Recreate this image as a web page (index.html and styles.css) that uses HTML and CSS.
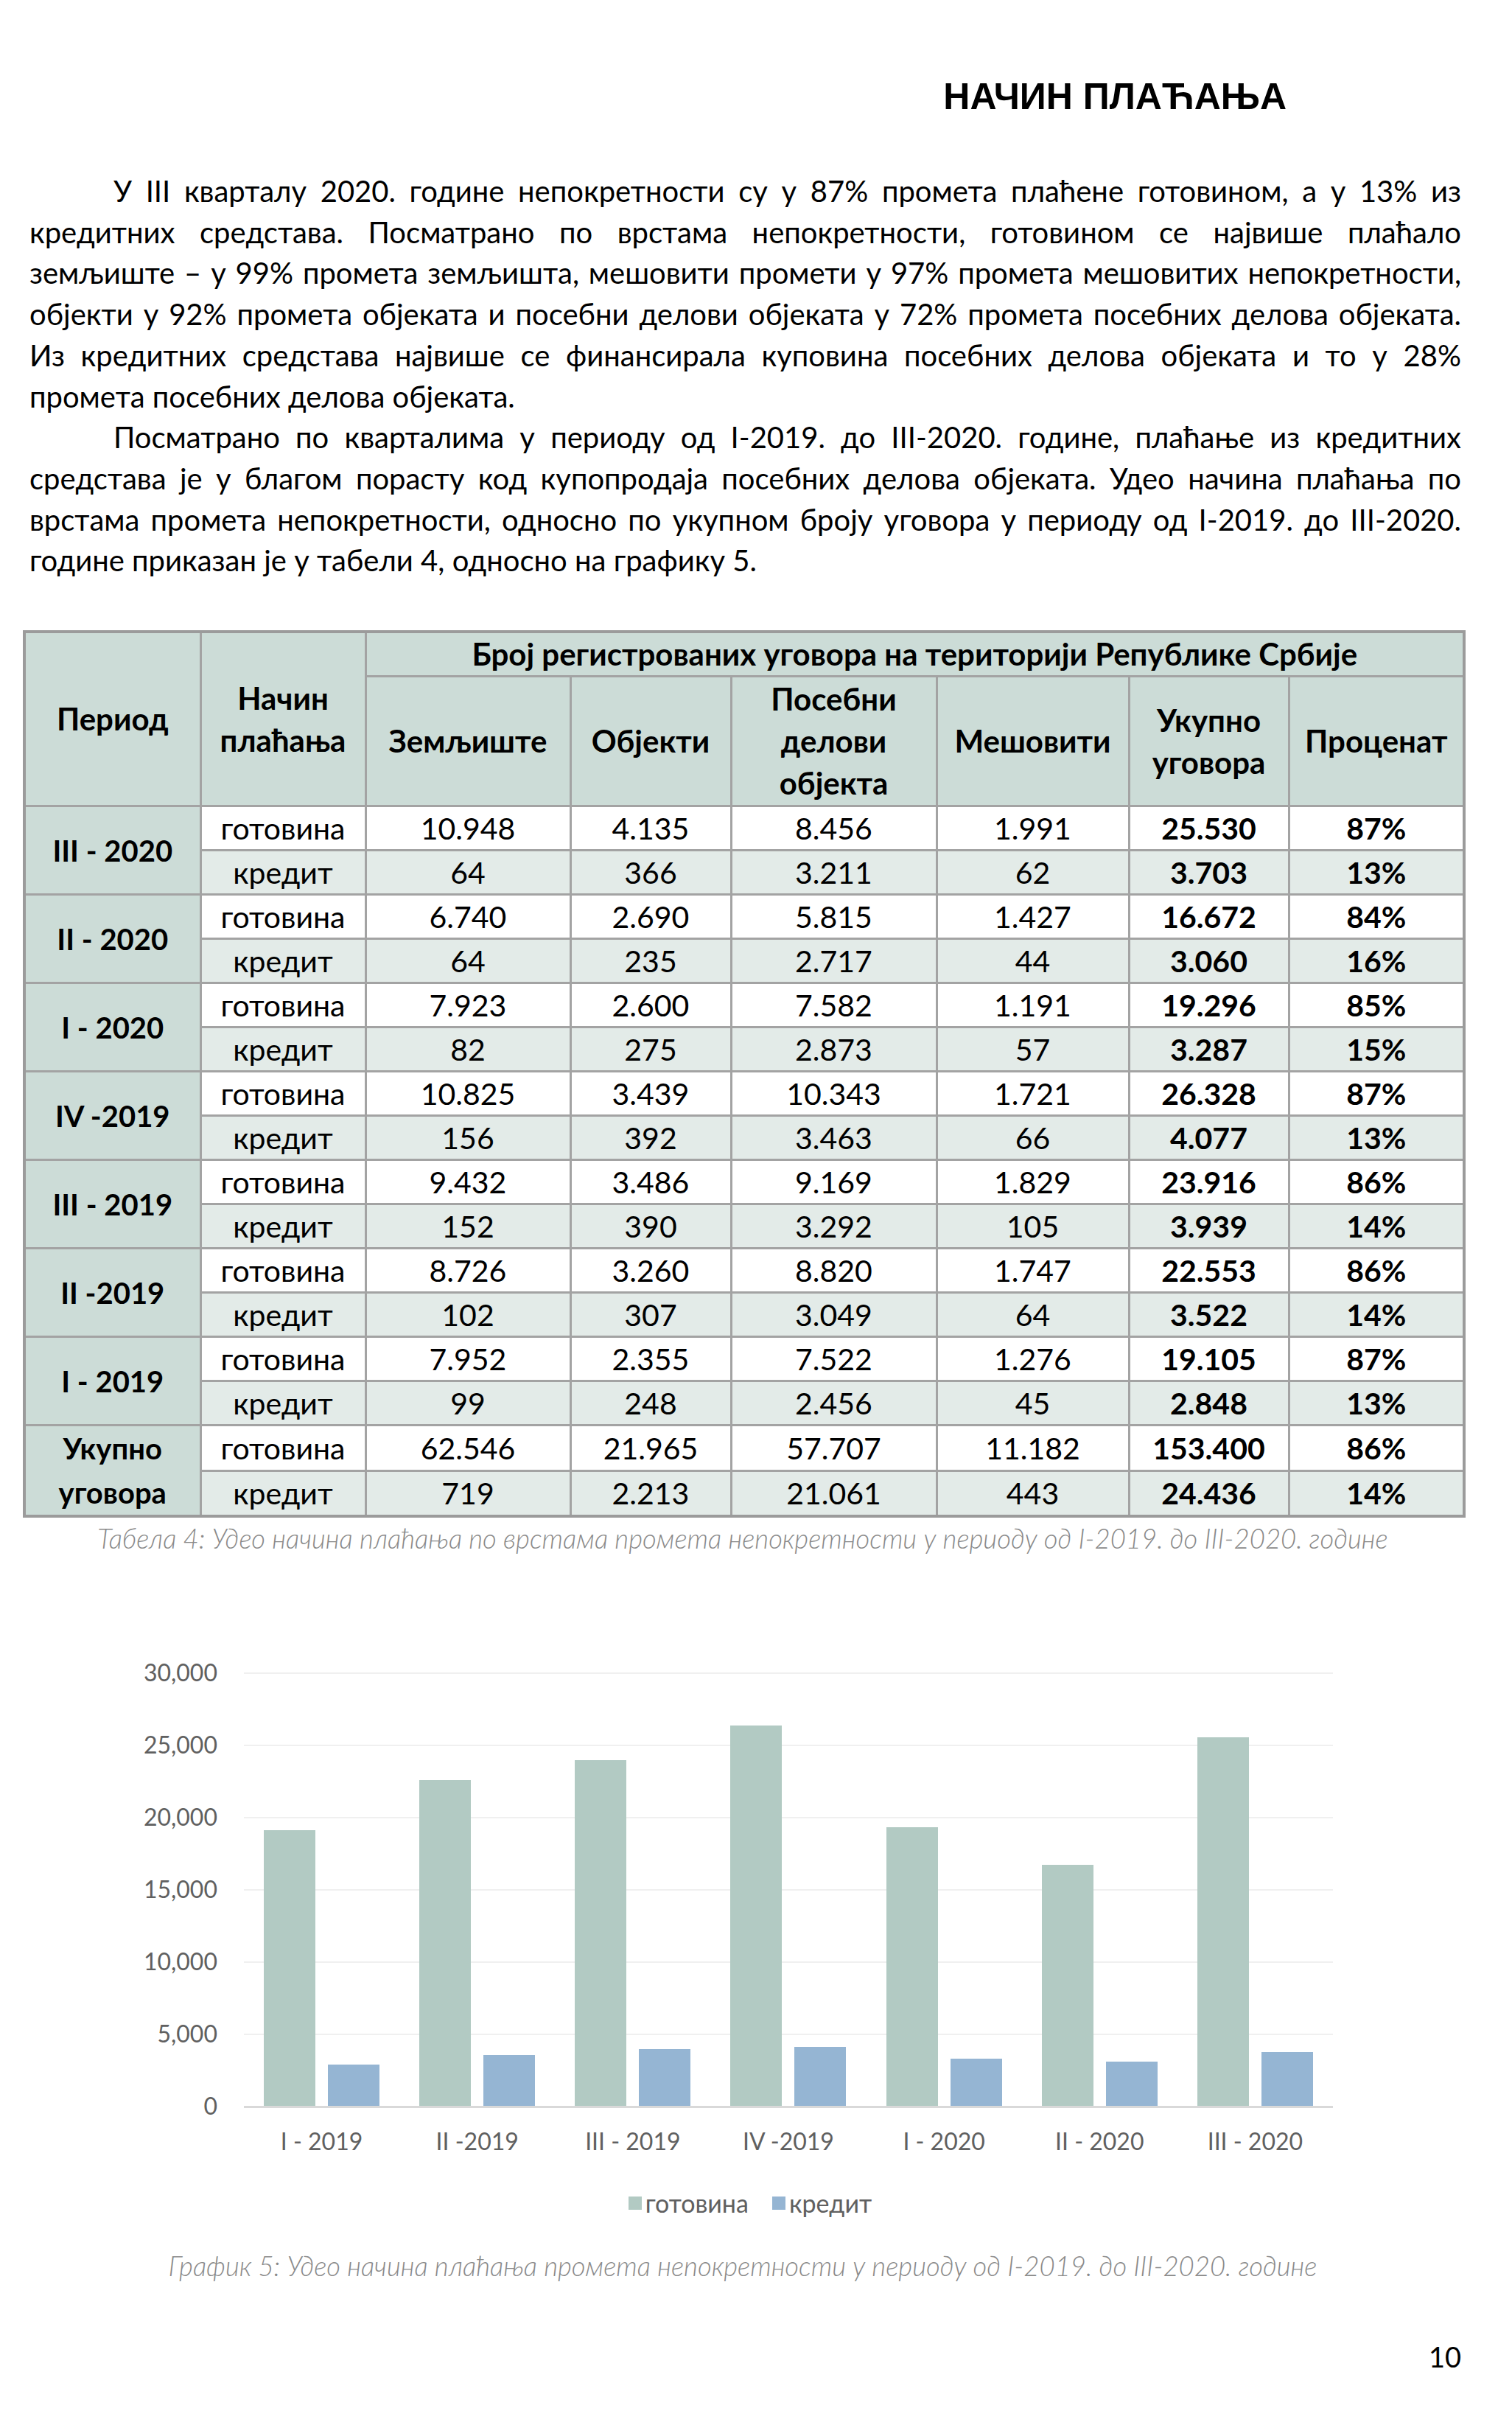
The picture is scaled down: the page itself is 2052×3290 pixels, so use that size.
FILE: index.html
```html
<!DOCTYPE html>
<html lang="sr">
<head>
<meta charset="utf-8">
<title>Начин плаћања</title>
<link rel="stylesheet" href="styles.css">
</head>
<body>
<div class="page">
  <h1 class="title">НАЧИН ПЛАЋАЊА</h1>

  <div class="text">
    <p class="para">
      <span class="ln ind">У III кварталу 2020. године непокретности су у 87% промета плаћене готовином, а у 13% из</span>
      <span class="ln">кредитних средстава. Посматрано по врстама непокретности, готовином се највише плаћало</span>
      <span class="ln">земљиште – у 99% промета земљишта, мешовити промети у 97% промета мешовитих непокретности,</span>
      <span class="ln">објекти у 92% промета објеката и посебни делови објеката у 72% промета посебних делова објеката.</span>
      <span class="ln">Из кредитних средстава највише се финансирала куповина посебних делова објеката и то у 28%</span>
      <span class="ln last">промета посебних делова објеката.</span>
    </p>
    <p class="para">
      <span class="ln ind">Посматрано по кварталима у периоду од I-2019. до III-2020. године, плаћање из кредитних</span>
      <span class="ln">средстава је у благом порасту код купопродаја посебних делова објеката. Удео начина плаћања по</span>
      <span class="ln">врстама промета непокретности, односно по укупном броју уговора у периоду од I-2019. до III-2020.</span>
      <span class="ln last">године приказан је у табели 4, односно на графику 5.</span>
    </p>
  </div>

  <table class="tbl">
    <colgroup>
      <col class="w239"><col class="w224"><col class="w278"><col class="w218"><col class="w279"><col class="w261"><col class="w217"><col class="w238">
    </colgroup>
    <thead>
      <tr class="h1">
        <th rowspan="2">Период</th>
        <th rowspan="2">Начин<br>плаћања</th>
        <th colspan="6">Број регистрованих уговора на територији Републике Србије</th>
      </tr>
      <tr class="h2">
        <th>Земљиште</th>
        <th>Објекти</th>
        <th>Посебни<br>делови<br>објекта</th>
        <th>Мешовити</th>
        <th>Укупно<br>уговора</th>
        <th>Проценат</th>
      </tr>
    </thead>
    <tbody>
      <tr class="cash"><th rowspan="2" class="per">III - 2020</th><td>готовина</td><td>10.948</td><td>4.135</td><td>8.456</td><td>1.991</td><td class="b">25.530</td><td class="b">87%</td></tr>
      <tr class="cr"><td>кредит</td><td>64</td><td>366</td><td>3.211</td><td>62</td><td class="b">3.703</td><td class="b">13%</td></tr>
      <tr class="cash"><th rowspan="2" class="per">II - 2020</th><td>готовина</td><td>6.740</td><td>2.690</td><td>5.815</td><td>1.427</td><td class="b">16.672</td><td class="b">84%</td></tr>
      <tr class="cr"><td>кредит</td><td>64</td><td>235</td><td>2.717</td><td>44</td><td class="b">3.060</td><td class="b">16%</td></tr>
      <tr class="cash"><th rowspan="2" class="per">I - 2020</th><td>готовина</td><td>7.923</td><td>2.600</td><td>7.582</td><td>1.191</td><td class="b">19.296</td><td class="b">85%</td></tr>
      <tr class="cr"><td>кредит</td><td>82</td><td>275</td><td>2.873</td><td>57</td><td class="b">3.287</td><td class="b">15%</td></tr>
      <tr class="cash"><th rowspan="2" class="per">IV -2019</th><td>готовина</td><td>10.825</td><td>3.439</td><td>10.343</td><td>1.721</td><td class="b">26.328</td><td class="b">87%</td></tr>
      <tr class="cr"><td>кредит</td><td>156</td><td>392</td><td>3.463</td><td>66</td><td class="b">4.077</td><td class="b">13%</td></tr>
      <tr class="cash"><th rowspan="2" class="per">III - 2019</th><td>готовина</td><td>9.432</td><td>3.486</td><td>9.169</td><td>1.829</td><td class="b">23.916</td><td class="b">86%</td></tr>
      <tr class="cr"><td>кредит</td><td>152</td><td>390</td><td>3.292</td><td>105</td><td class="b">3.939</td><td class="b">14%</td></tr>
      <tr class="cash"><th rowspan="2" class="per">II -2019</th><td>готовина</td><td>8.726</td><td>3.260</td><td>8.820</td><td>1.747</td><td class="b">22.553</td><td class="b">86%</td></tr>
      <tr class="cr"><td>кредит</td><td>102</td><td>307</td><td>3.049</td><td>64</td><td class="b">3.522</td><td class="b">14%</td></tr>
      <tr class="cash"><th rowspan="2" class="per">I - 2019</th><td>готовина</td><td>7.952</td><td>2.355</td><td>7.522</td><td>1.276</td><td class="b">19.105</td><td class="b">87%</td></tr>
      <tr class="cr"><td>кредит</td><td>99</td><td>248</td><td>2.456</td><td>45</td><td class="b">2.848</td><td class="b">13%</td></tr>
      <tr class="cash"><th rowspan="2" class="per total">Укупно<br>уговора</th><td>готовина</td><td>62.546</td><td>21.965</td><td>57.707</td><td>11.182</td><td class="b">153.400</td><td class="b">86%</td></tr>
      <tr class="cr"><td>кредит</td><td>719</td><td>2.213</td><td>21.061</td><td>443</td><td class="b">24.436</td><td class="b">14%</td></tr>
    </tbody>
  </table>
  <p class="cap tcap">Табела 4: Удео начина плаћања по врстама промета непокретности у периоду од I-2019. до III-2020. године</p>

  <div class="chart">
    <div class="plotrow">
      <div class="yaxis">
        <span>30,000</span><span>25,000</span><span>20,000</span><span>15,000</span><span>10,000</span><span>5,000</span><span>0</span>
      </div>
      <div class="plot">
        <div class="grp"><div class="bar c" style="height:374.5px"></div><div class="bar k" style="height:55.8px"></div></div>
        <div class="grp"><div class="bar c" style="height:442.0px"></div><div class="bar k" style="height:69.0px"></div></div>
        <div class="grp"><div class="bar c" style="height:468.8px"></div><div class="bar k" style="height:77.2px"></div></div>
        <div class="grp"><div class="bar c" style="height:516.0px"></div><div class="bar k" style="height:79.9px"></div></div>
        <div class="grp"><div class="bar c" style="height:378.2px"></div><div class="bar k" style="height:64.4px"></div></div>
        <div class="grp"><div class="bar c" style="height:326.8px"></div><div class="bar k" style="height:60.0px"></div></div>
        <div class="grp"><div class="bar c" style="height:500.4px"></div><div class="bar k" style="height:72.6px"></div></div>
      </div>
    </div>
    <div class="xlabels">
      <span>I - 2019</span><span>II -2019</span><span>III - 2019</span><span>IV -2019</span><span>I - 2020</span><span>II - 2020</span><span>III - 2020</span>
    </div>
    <div class="legend">
      <span class="li"><span class="sw c"></span>готовина</span>
      <span class="li"><span class="sw k"></span>кредит</span>
    </div>
  </div>
  <p class="cap gcap">График 5: Удео начина плаћања промета непокретности у периоду од I-2019. до III-2020. године</p>

  <div class="pnum">10</div>
</div>
</body>
</html>
```

FILE: styles.css
```css
html, body {
  margin: 0;
  padding: 0;
  background: #ffffff;
}

body {
  font-family: Lato, "Open Sans", "Noto Sans", sans-serif;
  color: #000000;
}

.page {
  width: 2052px;
  height: 3290px;
  box-sizing: border-box;
  padding: 0 67px 0 31px;
  overflow: hidden;
}

.title {
  margin: 101px 0 0;
  padding-right: 239px;
  font-family: "Liberation Sans", Arial, sans-serif;
  font-weight: 700;
  font-size: 50px;
  line-height: 60px;
  text-align: right;
}

.text {
  margin-top: 71px;
  padding: 0 2px 0 9px;
  font-weight: 400;
  font-size: 40px;
  line-height: 55.7px;
}

.para {
  margin: 0;
}

.ln {
  display: block;
  text-align: justify;
  text-align-last: justify;
}

.ln.last {
  text-align-last: left;
}

.ln.ind {
  text-indent: 114px;
}

/* table */
.tbl {
  margin-top: 66px;
  width: 1954px;
  table-layout: fixed;
  border-collapse: collapse;
  border: 4px solid #9b9b9b;
}

.w239 { width: 239px; }
.w224 { width: 224px; }
.w278 { width: 278px; }
.w218 { width: 218px; }
.w279 { width: 279px; }
.w261 { width: 261px; }
.w217 { width: 217px; }
.w238 { width: 238px; }

.tbl th,
.tbl td {
  border: 3px solid #a3a3a3;
  padding: 0;
  text-align: center;
  vertical-align: middle;
}

.tbl thead th {
  background: #ccdcd7;
  font-weight: 700;
  font-size: 42px;
  line-height: 57px;
}

.tbl .h1 th {
  height: 56px;
}

.tbl .h2 th {
  height: 173px;
}

.tbl tbody td {
  height: 57px;
  font-size: 41px;
  line-height: 1;
  font-weight: 400;
}

.tbl tbody tr.cr td {
  background: #e3ebe8;
}

.tbl tbody td.b {
  font-weight: 700;
}

.tbl .per {
  background: #ccdcd7;
  font-weight: 700;
  font-size: 40px;
  line-height: 60px;
}

/* captions */
.cap {
  margin: 0;
  text-align: center;
  font-style: italic;
  font-weight: 300;
  font-size: 36.5px;
  line-height: 40px;
  color: #8a8a8a;
}

.tcap {
  margin-top: 8px;
}

/* chart */
.chart {
  margin-top: 162px;
}

.plotrow {
  display: grid;
  grid-template-columns: 264px 1478px;
  column-gap: 36px;
}

.yaxis {
  display: flex;
  flex-direction: column;
  justify-content: space-between;
  height: 628px;
  margin: -20px 0 -20px;
  text-align: right;
  font-size: 32px;
  line-height: 40px;
  color: #606060;
}

.plot {
  height: 588px;
  border-bottom: 3px solid #d9d9d9;
  background: repeating-linear-gradient(to bottom, #f0f0f0 0, #f0f0f0 2px, transparent 2px, transparent 98px);
  display: flex;
}

.grp {
  flex: 1;
  display: flex;
  align-items: flex-end;
  justify-content: center;
  gap: 17px;
}

.bar {
  width: 70px;
}

.c {
  background: #b2cac3;
}

.k {
  background: #95b5d3;
}

.xlabels {
  margin: 25px 0 0 300px;
  width: 1478px;
  display: grid;
  grid-template-columns: repeat(7, 1fr);
  text-align: center;
  font-size: 32px;
  line-height: 40px;
  color: #606060;
}

.legend {
  margin-top: 44px;
  padding-left: 20px;
  display: flex;
  justify-content: center;
  gap: 32px;
  font-size: 34px;
  line-height: 40px;
  color: #606060;
}

.li {
  display: flex;
  align-items: center;
  gap: 5px;
}

.sw {
  width: 18px;
  height: 18px;
}

.gcap {
  margin-top: 45px;
}

.pnum {
  margin-top: 80px;
  padding-right: 2px;
  text-align: right;
  font-size: 38px;
  line-height: 46px;
}
```
